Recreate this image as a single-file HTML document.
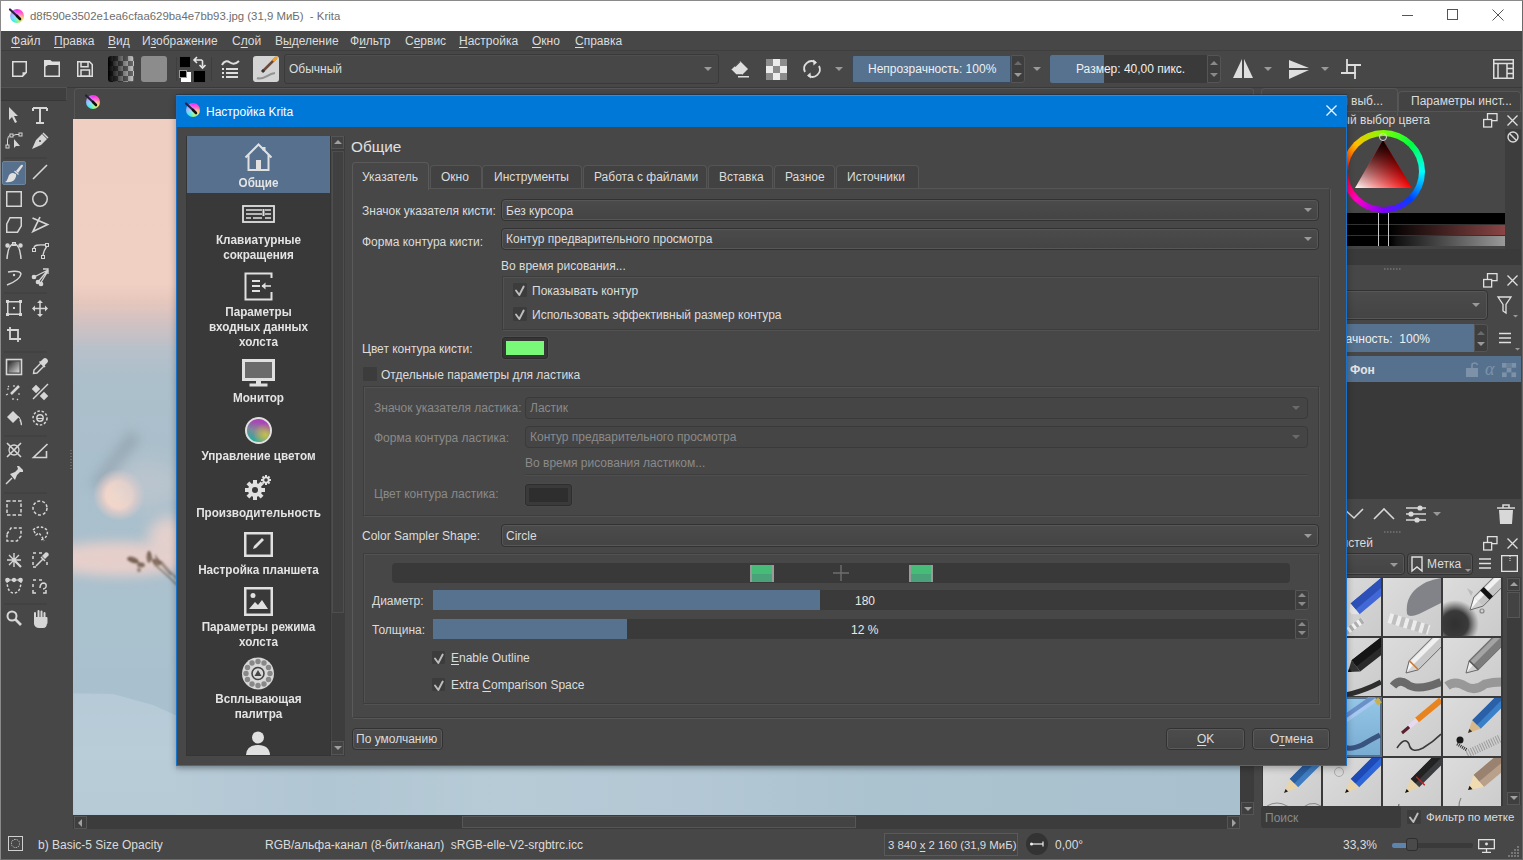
<!DOCTYPE html>
<html><head><meta charset="utf-8">
<style>
*{margin:0;padding:0;box-sizing:border-box}
html,body{width:1523px;height:860px;overflow:hidden;background:#474747;font-family:"Liberation Sans",sans-serif;color:#dcdcdc}
.a{position:absolute}
.t{position:absolute;white-space:nowrap;font-size:12px;line-height:14px}
svg{position:absolute;overflow:visible}
u{text-decoration:underline;text-underline-offset:2px}
.ddarr{position:absolute;width:0;height:0;border-left:4px solid transparent;border-right:4px solid transparent;border-top:4px solid #9a9a9a}
.combo{position:absolute;background:linear-gradient(#4b4b4b,#444);border:1px solid #323232;border-radius:4px;box-shadow:inset 0 0 0 1px #575757}
.chk{position:absolute;width:14px;height:14px;background:#3c3c3c;border-radius:1px}

.kic{position:absolute;width:14px;height:14px;border-radius:50%;background:radial-gradient(circle at 50% 55%,rgba(230,240,255,0.55) 0,rgba(230,240,255,0) 60%),conic-gradient(#ff2cf5 0deg,#ff5cc0 60deg,#ffe060 120deg,#a0f070 165deg,#30f0e0 210deg,#80c8ff 255deg,#b0a0ff 300deg,#ff2cf5 360deg)}
.box{position:absolute;border:1px solid #3e3e3e;box-shadow:1px 1px 0 #505050 inset}
</style></head><body>
<!-- window border -->
<div class="a" style="left:0;top:0;width:1523px;height:860px;border:1px solid #8a8a8a;border-right:1px solid #6a6a6a;border-bottom:1px solid #6a6a6a"></div>
<!-- TITLE BAR -->
<div class="a" style="left:1px;top:1px;width:1521px;height:30px;background:#fff"></div>
<svg style="left:0;top:0;width:0;height:0"><defs><linearGradient id="kg" x1="0" y1="0" x2="1" y2="1"><stop offset="0" stop-color="#b04cff"/><stop offset="1" stop-color="#4ff"/></linearGradient><linearGradient id="kg2" x1="0" y1="1" x2="1" y2="0"><stop offset="0" stop-color="#2ee6ff"/><stop offset="1" stop-color="#ff40e0" stop-opacity="0"/></linearGradient></defs></svg>
<div class="kic" style="left:10px;top:9px"></div><svg style="left:9px;top:8px" width="16" height="16" viewBox="0 0 16 16"><path d="M1 1.5L8 8" stroke="#2a2040" stroke-width="2.2" stroke-linecap="round"/><path d="M8 8L11 11" stroke="#111" stroke-width="2.6" stroke-linecap="round"/></svg>
<div class="t" style="left:30px;top:9px;font-size:11.4px;color:#6e6e6e">d8f590e3502e1ea6cfaa629ba4e7bb93.jpg (31,9 МиБ)&nbsp; - Krita</div>
<svg style="left:1402px;top:15px" width="12" height="1"><rect width="11" height="1" fill="#555"/></svg>
<div class="a" style="left:1447px;top:9px;width:11px;height:11px;border:1px solid #555"></div>
<svg style="left:1492px;top:9px" width="12" height="12" viewBox="0 0 12 12"><path d="M0.5 0.5L11.5 11.5M11.5 0.5L0.5 11.5" stroke="#555" stroke-width="1"/></svg>

<!-- MENU -->
<div class="a" style="left:1px;top:31px;width:1521px;height:19px;background:#474747"></div>
<div class="t" style="left:11px;top:34px;color:#dcdcdc">
<span class="a" style="left:0"><u>Ф</u>айл</span><span class="a" style="left:43px"><u>П</u>равка</span><span class="a" style="left:97px"><u>В</u>ид</span><span class="a" style="left:131px">И<u>з</u>ображение</span><span class="a" style="left:221px">С<u>л</u>ой</span><span class="a" style="left:264px">В<u>ы</u>деление</span><span class="a" style="left:339px">Ф<u>и</u>льтр</span><span class="a" style="left:394px">С<u>е</u>рвис</span><span class="a" style="left:448px"><u>Н</u>астройка</span><span class="a" style="left:521px"><u>О</u>кно</span><span class="a" style="left:564px"><u>С</u>правка</span>
</div>

<!-- TOOLBAR -->
<div class="a" style="left:1px;top:50px;width:1521px;height:38px;background:#474747;border-top:1px solid #3e3e3e;border-bottom:1px solid #3a3a3a"></div>
<!-- new doc -->
<svg style="left:12px;top:61px" width="16" height="17" viewBox="0 0 16 17"><path d="M0.75 0.75H14.25V11.5L10.5 15.25H0.75Z" fill="none" stroke="#dedede" stroke-width="1.5"/><path d="M14.25 11.25L10.5 15.25V11.25Z" fill="#dedede"/></svg>
<!-- open -->
<svg style="left:44px;top:60px" width="17" height="17" viewBox="0 0 17 17"><path d="M0.75 16.25V0.75H6L8 2.25H15.25V16.25Z" fill="none" stroke="#dedede" stroke-width="1.5"/><path d="M0.75 0.75H6L8 2.25H15.25V5H4L0.75 7Z" fill="#dedede"/></svg>
<!-- save -->
<svg style="left:77px;top:61px" width="17" height="17" viewBox="0 0 17 17"><path d="M0.75 0.75H12.5L15.25 3.5V15.25H0.75Z" fill="none" stroke="#dedede" stroke-width="1.5"/><rect x="4" y="0.75" width="7" height="5" fill="none" stroke="#dedede" stroke-width="1.5"/><rect x="4" y="9" width="8.5" height="6.25" fill="none" stroke="#dedede" stroke-width="1.5"/></svg>
<!-- gradient -->
<div class="a" style="left:108px;top:56px;width:26px;height:26px;border-radius:3px;overflow:hidden;background:linear-gradient(90deg,#000 0%,rgba(0,0,0,0.75) 25%,rgba(0,0,0,0) 100%),conic-gradient(#6e6e6e 25%,#c8c8c8 0 50%,#6e6e6e 0 75%,#c8c8c8 0) 0 0/10px 10px"></div>
<!-- pattern -->
<div class="a" style="left:141px;top:56px;width:26px;height:26px;border-radius:3px;background:#8c8c8c"></div>
<!-- fg/bg -->
<div class="a" style="left:176px;top:57px;width:1px;height:24px;background:#3e3e3e"></div>
<div class="a" style="left:179px;top:56px;width:12px;height:12px;background:#000;border:1px solid #444"></div>
<svg style="left:193px;top:56px" width="13" height="13" viewBox="0 0 13 13"><path d="M4 1L1 4L4 7M1.5 4H8.5L9.5 5V10.5M6.5 9L9.5 12L12.5 9" fill="none" stroke="#e6e6e6" stroke-width="1.6"/></svg>
<div class="a" style="left:181px;top:72px;width:10px;height:10px;background:#fff"></div>
<div class="a" style="left:179px;top:70px;width:8px;height:8px;background:#000;border:1px solid #999"></div>
<div class="a" style="left:193px;top:70px;width:13px;height:13px;background:#000;border:1px solid #444"></div>
<div class="a" style="left:211px;top:57px;width:1px;height:24px;background:#3e3e3e"></div>
<!-- brush list -->
<svg style="left:221px;top:59px" width="19" height="20" viewBox="0 0 19 20"><path d="M1 6C3 2 6 1.5 9 3.5S15 5 18 2" fill="none" stroke="#dedede" stroke-width="2"/><rect x="1" y="9" width="2" height="2" fill="#dedede"/><rect x="5" y="9" width="12" height="2" fill="#dedede"/><rect x="1" y="13" width="2" height="2" fill="#dedede"/><rect x="5" y="13" width="12" height="2" fill="#dedede"/><rect x="1" y="17" width="2" height="2" fill="#dedede"/><rect x="5" y="17" width="12" height="2" fill="#dedede"/></svg>
<!-- brush preset thumb -->
<div class="a" style="left:253px;top:56px;width:26px;height:26px;border-radius:3px;background:#d4d4d4;overflow:hidden">
<svg style="left:0;top:0" width="26" height="26" viewBox="0 0 26 26"><path d="M4 22C10 25 14 18 22 17" stroke="#777" stroke-width="2" fill="none" opacity="0.7"/><path d="M10 15L23 2" stroke="#6b4a3a" stroke-width="2.5"/><path d="M20 5L24 1" stroke="#f0a030" stroke-width="3"/><path d="M9 16L11 14" stroke="#333" stroke-width="3"/></svg></div>
<!-- blend combo -->
<div class="combo" style="left:284px;top:54px;width:435px;height:30px;background:#474747;border-color:#3a3a3a;border-radius:3px;box-shadow:inset 0 1px 0 #4e4e4e"></div>
<div class="t" style="left:289px;top:62px;font-size:12px;color:#dcdcdc">Обычный</div>
<div class="ddarr" style="left:704px;top:67px"></div>
<!-- eraser -->
<svg style="left:730px;top:60px" width="20" height="18" viewBox="0 0 20 18"><path d="M10 1L18 9L12 15H6L1 10Z" fill="#dedede"/><path d="M1 10L6 15H12" fill="none" stroke="#474747" stroke-width="1.5"/><path d="M10 1.5L5 6.5" stroke="#474747" stroke-width="1.2"/><rect x="8" y="16" width="11" height="1.5" fill="#dedede"/></svg>
<!-- checker -->
<div class="a" style="left:766px;top:59px;width:21px;height:21px;background:conic-gradient(#ececec 25%,#8c8c8c 0 50%,#ececec 0 75%,#8c8c8c 0) 0 0/14px 14px"></div>
<!-- reload -->
<svg style="left:802px;top:59px" width="20" height="20" viewBox="0 0 20 20"><path d="M3 13A7.5 7.5 0 0 1 13.5 3.2" fill="none" stroke="#dedede" stroke-width="1.8"/><path d="M17 7A7.5 7.5 0 0 1 6.5 16.8" fill="none" stroke="#dedede" stroke-width="1.8"/><path d="M11 0.5L15 3.5L11.5 6.5Z" fill="#dedede"/><path d="M9 19.5L5 16.5L8.5 13.5Z" fill="#dedede"/></svg>
<div class="ddarr" style="left:835px;top:67px"></div>
<!-- opacity slider -->
<div class="a" style="left:852px;top:55px;width:159px;height:28px;background:#56728f;border-radius:2px 0 0 2px;border:1px solid #3a4a5a"></div>
<div class="t" style="left:868px;top:62px;color:#f0f0f0">Непрозрачность: 100%</div>
<div class="a" style="left:1011px;top:55px;width:14px;height:28px;background:#3e3e3e;border:1px solid #555;border-radius:0 3px 3px 0"></div>
<div class="a" style="left:1014px;top:61px;border-left:4px solid transparent;border-right:4px solid transparent;border-bottom:4px solid #6a6a6a"></div>
<div class="a" style="left:1014px;top:73px;border-left:4px solid transparent;border-right:4px solid transparent;border-top:4px solid #9a9a9a"></div>
<div class="ddarr" style="left:1033px;top:67px"></div>
<!-- size slider -->
<div class="a" style="left:1050px;top:55px;width:157px;height:28px;background:#3a3a3a;border-radius:2px 0 0 2px"></div>
<div class="a" style="left:1050px;top:55px;width:54px;height:28px;background:#56728f;border-radius:2px 0 0 2px"></div>
<div class="t" style="left:1076px;top:62px;color:#f0f0f0">Размер: 40,00 пикс.</div>
<div class="a" style="left:1207px;top:55px;width:14px;height:28px;background:#3e3e3e;border:1px solid #555;border-radius:0 3px 3px 0"></div>
<div class="a" style="left:1210px;top:61px;border-left:4px solid transparent;border-right:4px solid transparent;border-bottom:4px solid #8a8a8a"></div>
<div class="a" style="left:1210px;top:73px;border-left:4px solid transparent;border-right:4px solid transparent;border-top:4px solid #8a8a8a"></div>
<!-- mirror H -->
<svg style="left:1232px;top:58px" width="22" height="22" viewBox="0 0 22 22"><path d="M10 1V20H1Z" fill="#dedede"/><path d="M12 1V20H21Z" fill="#dedede"/></svg>
<div class="ddarr" style="left:1264px;top:67px"></div>
<!-- mirror V -->
<svg style="left:1288px;top:59px" width="22" height="21" viewBox="0 0 22 21"><path d="M1 1L21 9H1Z" fill="#dedede"/><path d="M1 11H21L1 20Z" fill="#dedede"/></svg>
<div class="ddarr" style="left:1321px;top:67px"></div>
<!-- crop -->
<svg style="left:1340px;top:58px" width="22" height="22" viewBox="1340 58 22 22"><path d="M1347 59V73.5M1347 65H1361M1355 65V79M1341 73H1356" fill="none" stroke="#dedede" stroke-width="1.8"/></svg>
<!-- workspace -->
<svg style="left:1493px;top:59px" width="21" height="20" viewBox="0 0 21 20"><rect x="0.75" y="0.75" width="19.5" height="18.5" fill="none" stroke="#dedede" stroke-width="1.5"/><path d="M0.75 4.5H20.25M5 4.5V19.25M14 4.5V19.25M14 9.5H20.25M14 14.5H20.25" stroke="#dedede" stroke-width="1.5"/></svg>

<!-- TOOLBOX -->
<div class="a" style="left:1px;top:88px;width:71px;height:741px;background:#474747"></div>
<div class="a" style="left:1px;top:87px;width:66px;height:14px;background:#3f3f3f;border:1px solid #4e4e4e;border-left:none;border-top-color:#525252;border-bottom-color:#383838"></div>
<svg style="left:0;top:100px" width="72" height="540" viewBox="0 100 72 540" fill="none" stroke="#d6d6d6" stroke-width="1.5">
 <!-- select -->
 <path d="M9 107L9 120L12 117L15 123L17 122L14 116L18 116Z" fill="#d6d6d6" stroke="none"/>
 <!-- text -->
 <path d="M33 108H47M40 108V123M36 123H44M33 108V111M47 108V111" stroke-width="2"/>
 <!-- path edit -->
 <rect x="6" y="145" width="3" height="3" stroke-width="1"/><rect x="10" y="134" width="3" height="3" stroke-width="1"/><rect x="19" y="133" width="3" height="3" stroke-width="1"/><path d="M7.5 145V140Q8 135 10 135.5M13 135.5Q16 134 19 134.5" stroke-width="1"/><path d="M14 139V148L16 146L20 146Z" fill="#d6d6d6" stroke="none"/>
 <!-- pen calligraphy -->
 <path d="M32 149L36 140L42 134L47 139L41 145ZM33 148L39 142" fill="#d6d6d6" stroke="none"/><path d="M43 133L48 138" stroke-width="1.5"/><circle cx="40" cy="141" r="1" fill="#474747" stroke="none"/>
 <!-- separator -->
 <path d="M4 158H47" stroke="#3e3e3e" stroke-width="1"/>
 <!-- rect -->
 <rect x="6.75" y="191.75" width="14.5" height="14.5"/>
 <!-- ellipse -->
 <circle cx="40" cy="199" r="7.25"/>
 <!-- polygon -->
 <path d="M6.75 224L10 217.75H21.25V226L17.5 232.25H6.75Z"/>
 <!-- polyline -->
 <path d="M32.5 218L47.5 224.5L33 231.5L40 217" stroke-width="1.7"/>
 <!-- bezier -->
 <path d="M7 259Q8 244 14 244Q20 244 21 259"/><circle cx="7.5" cy="245.5" r="1.5" fill="#d6d6d6"/><rect x="12.5" y="242.5" width="3" height="3" stroke-width="1"/><circle cx="20.5" cy="245.5" r="1.5" fill="#d6d6d6"/>
 <!-- curve path -->
 <rect x="32.5" y="248.5" width="3" height="3" stroke-width="1"/><rect x="45.5" y="243.5" width="3" height="3" stroke-width="1"/><rect x="41.5" y="255.5" width="3" height="3" stroke-width="1"/><path d="M34 248Q34 244 45 245M47 246Q44 250 43 255" stroke-width="1.3"/>
 <!-- freehand path -->
 <path d="M8 272Q20 270 21 274Q20 280 7 285" stroke-width="1.5"/><circle cx="14" cy="275" r="1.2" fill="#d6d6d6" stroke="none"/>
 <!-- dyna -->
 <path d="M34 277L48 270M38 282L48 270M40 284L48 271" stroke-width="1.3"/><circle cx="34" cy="277" r="1.6" fill="#d6d6d6"/><circle cx="38" cy="282" r="1.6" fill="#d6d6d6"/><circle cx="41" cy="284" r="1.6" fill="#d6d6d6"/><path d="M43 269L48 269L48 274" stroke-width="1.3"/>
 <path d="M4 293H47" stroke="#3e3e3e" stroke-width="1"/>
 <!-- transform -->
 <rect x="7.75" y="301.75" width="12.5" height="12.5"/><rect x="6" y="300" width="3" height="3" fill="#d6d6d6" stroke="none"/><rect x="19" y="300" width="3" height="3" fill="#d6d6d6" stroke="none"/><rect x="6" y="313" width="3" height="3" fill="#d6d6d6" stroke="none"/><rect x="19" y="313" width="3" height="3" fill="#d6d6d6" stroke="none"/><rect x="13" y="307" width="2" height="2" fill="#d6d6d6" stroke="none"/>
 <!-- move -->
 <path d="M40 301V316M33 308.5H47"/><path d="M40 300L37 303H43ZM40 317L37 314H43ZM32 308.5L35 305.5V311.5ZM48 308.5L45 305.5V311.5Z" fill="#d6d6d6" stroke="none"/>
 <!-- crop -->
 <path d="M10 327V339H21M7 330H18V342" stroke-width="1.8"/>
 <path d="M4 352H47" stroke="#3e3e3e" stroke-width="1"/>
 <!-- gradient -->
 <defs><linearGradient id="gtg" x1="0" y1="0" x2="1" y2="1"><stop offset="0" stop-color="#2a2a2a"/><stop offset="1" stop-color="#d8d8d8"/></linearGradient></defs>
 <rect x="6.5" y="359.5" width="15" height="15" stroke-width="1.6"/><rect x="8.5" y="361.5" width="11" height="11" fill="url(#gtg)" stroke="none"/>
 <!-- color picker -->
 <path d="M33.5 373.5L34 370L41 363L44 366L37 373Z" stroke-width="1.4"/><path d="M40 362L43 359Q45 357 47 359Q49 361 47 363L44 366Z" fill="#d6d6d6" stroke="none"/><path d="M39.5 361.5L45 367" stroke-width="1.6"/>
 <!-- smart patch -->
 <path d="M11 394L19 386" stroke-width="2.5"/><path d="M7 389H9M14 385V387M6 395L8 394M13 398L13 400M18 394H20M8 386L9 387M17 399L18 400" stroke-width="1.2"/>
 <!-- color sampler multi -->
 <path d="M33 399L48 384" stroke-width="1.5"/><rect x="33" y="386" width="6" height="6" fill="#d6d6d6" stroke="none" transform="rotate(45 36 389)"/><rect x="41" y="393" width="6" height="6" fill="#d6d6d6" stroke="none" transform="rotate(45 44 396)"/>
 <!-- fill -->
 <path d="M7 417L13 411L19 417L13 423Z" fill="#d6d6d6" stroke="none"/><path d="M8 417H19L21 421" stroke="#d6d6d6" stroke-width="1"/><path d="M20 420Q22 424 21 425" stroke-width="1.5"/>
 <!-- enclose fill -->
 <circle cx="40" cy="418" r="7" stroke-dasharray="2.5 1.8"/><circle cx="40" cy="418" r="3.2" stroke-width="1.4"/><path d="M37 418.5H43" stroke-width="1.2"/>
 <path d="M4 436H47" stroke="#3e3e3e" stroke-width="1"/>
 <!-- assistant -->
 <path d="M7 443L21 457M21 443L7 457" stroke-width="1.6"/><circle cx="14" cy="450" r="5" stroke-width="1.3"/>
 <!-- measure -->
 <path d="M47.5 444L33.5 457.5H46.5V451" stroke-width="1.6"/>
 <!-- pin -->
 <path d="M6 484L12 478" stroke-width="1.4"/><path d="M10 474L15 472L18 469L17 466L19 466L23 470L23 472L20 472L17 475L15 480Z" fill="#d6d6d6" stroke="none"/>
 <path d="M4 493H47" stroke="#3e3e3e" stroke-width="1"/>
 <!-- rect sel -->
 <rect x="7" y="501" width="14" height="14" stroke-dasharray="3.5 2" stroke-width="1.5"/>
 <!-- ellipse sel -->
 <circle cx="40" cy="508" r="7" stroke-dasharray="3 2" stroke-width="1.5"/>
 <!-- poly sel -->
 <path d="M7 534L11 528H21V536L17 541H7Z" stroke-dasharray="3 2"/>
 <!-- freehand sel -->
 <path d="M33 530Q40 524 47 530Q49 537 41 540M34 531L36 535L39 533L42 537L44 541" stroke-dasharray="2.5 1.8"/>
 <!-- magic wand -->
 <path d="M14 560L21 567" stroke-width="2.2"/><path d="M14 553V567M7 560H21M9 555L19 565M19 555L9 565" stroke-width="1.4"/>
 <!-- similar sel -->
 <path d="M33 553H36M39 553H42M33 556V559M33 562V565M33 567H36M47 562V565" stroke-width="1.5"/><path d="M36 566L43 559M41 557L45 561" stroke-width="1.5"/><path d="M43 556L46 553Q48 553 48 555L45 558Z" fill="#d6d6d6"/>
 <!-- bezier sel -->
 <path d="M7 580Q7 593 14 593Q21 593 21 580" stroke-dasharray="2.5 1.8"/><path d="M7.5 580H20.5" stroke-width="1.2"/><circle cx="7.5" cy="580" r="1.6" fill="#d6d6d6"/><circle cx="20.5" cy="580" r="1.6" fill="#d6d6d6"/><circle cx="14" cy="580" r="1.4" fill="#d6d6d6"/>
 <!-- magnetic sel -->
 <path d="M33 580H36M39 580H42M33 584V587M33 590V593H36M46 590V593H43" stroke-width="1.5"/><path d="M40 588Q40 584 43 583Q47 583 46 587Q45 589 43 589" stroke-width="1.5"/>
 <path d="M4 604H47" stroke="#3e3e3e" stroke-width="1"/>
 <!-- zoom -->
 <circle cx="12" cy="616" r="4.5" stroke-width="2"/><path d="M15 619L21 625" stroke-width="2.6"/>
 <!-- pan -->
 <path d="M34 617V624Q35 628 39 628H43Q47 628 47 623V617" fill="#d6d6d6" stroke="none"/><path d="M35 619V613M38.5 618V611M41.5 618V611.5M44.5 619V613M46.5 623V618" stroke-width="2" stroke-linecap="round"/>
</svg>
<div class="a" style="left:2px;top:161px;width:24px;height:24px;background:#56708d;border:1px solid #6a86a3;border-radius:2px"></div>
<svg style="left:2px;top:161px" width="24" height="24" viewBox="0 0 24 24"><path d="M14 10L19 4Q21 3 21 5L16 12Z" fill="#e0e0e0"/><path d="M12.5 10L16.5 13.5" stroke="#e0e0e0" stroke-width="1.2"/><path d="M11 12Q7 12 6 17Q5 20 3 21Q10 22 13 18Q15 15 14 13Z" fill="#e0e0e0"/></svg>
<!-- line tool -->
<svg style="left:31px;top:163px" width="18" height="18"><path d="M2 16L16 2" stroke="#d6d6d6" stroke-width="1.6"/></svg>
<!-- grip -->
<svg style="left:70px;top:450px" width="2" height="21"><path d="M1 0V21" stroke="#8a8a8a" stroke-width="1" stroke-dasharray="1 2"/></svg>
<!-- toolbox bottom statusbar icon line -->


<!-- CANVAS -->
<div class="a" style="left:72px;top:88px;width:1188px;height:741px;background:#474747"></div>
<div class="a" style="left:74px;top:88px;width:1180px;height:31px;background:#474747;border:1px solid #565656;border-bottom:none;border-radius:4px 4px 0 0"></div>
<div class="kic" style="left:86px;top:95px"></div><svg style="left:85px;top:94px" width="16" height="16" viewBox="0 0 16 16"><path d="M1 1.5L8 8" stroke="#2a2040" stroke-width="2.2" stroke-linecap="round"/><path d="M8 8L11 11" stroke="#111" stroke-width="2.6" stroke-linecap="round"/></svg>
<div class="a" style="left:73px;top:119px;width:1167px;height:696px;overflow:hidden;background:linear-gradient(180deg,#efcfc2 0px,#f0d0c3 165px,#e8c8bd 180px,#d0c1c2 205px,#b6c0ca 232px,#acbfcb 260px,#a9bfcc 360px,#abc1ce 470px,#a9c1ce 575px,#aac2cf 700px)">
  <div class="a" style="left:0;top:574px;width:400px;height:122px;background:linear-gradient(180deg,#b6cbd7 0,#b9cdd9 60px,#b7cbd7 122px);clip-path:polygon(0 0,40px 1px,80px 12px,120px 30px,170px 60px,240px 122px,0 122px);filter:blur(1.2px)"></div>
  <div class="a" style="left:103px;top:646px;width:1064px;height:50px;background:linear-gradient(90deg,#b7cbd7 0,#b0c6d2 150px,#b6cbd6 320px,#b3c8d4 520px,#abc2cf 700px,#a9c1ce 1064px)"></div>
  <div class="a" style="left:103px;top:646px;width:1064px;height:6px;background:linear-gradient(180deg,rgba(110,130,145,0.3),rgba(110,130,145,0))"></div>
  <div class="a" style="left:10px;top:335px;width:66px;height:14px;background:#8593a0;filter:blur(6px);transform:rotate(-54deg);opacity:0.5"></div>
  <div class="a" style="left:20px;top:350px;width:52px;height:52px;border-radius:50%;background:radial-gradient(closest-side,#f7dbcd 0%,#f3d6c9 50%,rgba(230,205,200,0.75) 68%,rgba(200,205,215,0) 100%)"></div>
  <div class="a" style="left:-30px;top:423px;width:150px;height:34px;border-radius:50%;background:#e6cfcb;filter:blur(6px)"></div>
  <div class="a" style="left:75px;top:398px;width:40px;height:45px;border-radius:50%;background:#e3d0cd;filter:blur(7px)"></div>
  <div class="a" style="left:40px;top:340px;width:70px;height:50px;border-radius:50%;background:#c9c9cf;filter:blur(10px);opacity:0.5"></div>
  <svg style="left:46px;top:426px;filter:blur(0.9px)" width="60" height="45" viewBox="0 0 60 45"><path d="M8 14Q18 16 24 20M30 6Q32 14 36 20Q46 28 58 40M36 10Q44 22 52 30M42 16Q50 26 58 34" stroke="#5a4838" stroke-width="1.1" fill="none" opacity="0.8"/><ellipse cx="14" cy="15" rx="6" ry="3" fill="#5e4a38" opacity="0.75" transform="rotate(20 14 15)"/><ellipse cx="22" cy="20" rx="4" ry="2.5" fill="#5e4a38" opacity="0.7"/><ellipse cx="30" cy="12" rx="2.5" ry="6" fill="#5e4a38" opacity="0.7"/><ellipse cx="38" cy="17" rx="4.5" ry="3" fill="#5e4a38" opacity="0.7" transform="rotate(30 38 17)"/><ellipse cx="20" cy="25" rx="2" ry="2" fill="#5e4a38" opacity="0.6"/></svg>
</div>
<!-- vertical scrollbar -->
<div class="a" style="left:1240px;top:119px;width:14px;height:696px;background:#3c3c3c"></div>
<div class="a" style="left:1241px;top:802px;width:13px;height:13px;border:1px solid #555;background:#3f3f3f"></div>
<div class="a" style="left:1244px;top:807px;border-left:4px solid transparent;border-right:4px solid transparent;border-top:4px solid #a0a0a0"></div>
<!-- horizontal scrollbar -->
<div class="a" style="left:73px;top:815px;width:1167px;height:14px;background:#3c3c3c"></div>
<div class="a" style="left:74px;top:816px;width:13px;height:13px;border:1px solid #555;background:#3f3f3f"></div>
<div class="a" style="left:78px;top:819px;border-top:4px solid transparent;border-bottom:4px solid transparent;border-right:4px solid #a0a0a0"></div>
<div class="a" style="left:462px;top:816px;width:394px;height:12px;border:1px solid #565656;background:#434343"></div>
<div class="a" style="left:1227px;top:816px;width:13px;height:13px;border:1px solid #555;background:#3f3f3f"></div>
<div class="a" style="left:1232px;top:819px;border-top:4px solid transparent;border-bottom:4px solid transparent;border-left:4px solid #a0a0a0"></div>

<!-- DOCK -->
<div class="a" style="left:1255px;top:88px;width:267px;height:741px;background:#474747"></div>
<div class="a" style="left:1261px;top:88px;width:137px;height:28px;background:#474747;border:1px solid #565656;border-bottom:none;border-radius:4px 4px 0 0"></div>
<div class="t" style="right:140px;top:94px">Расширенный выб...</div>
<div class="a" style="left:1398px;top:91px;width:123px;height:20px;background:#434343;border:1px solid #565656;border-bottom:none;border-radius:4px 4px 0 0"></div>
<div class="t" style="left:1411px;top:94px">Параметры инст...</div>
<div class="a" style="left:1261px;top:111px;width:261px;height:1px;background:#555"></div>
<div class="t" style="right:93px;top:113px">Расширенный выбор цвета</div>
<svg style="left:1483px;top:113px" width="15" height="15" viewBox="0 0 15 15" fill="none" stroke="#e0e0e0" stroke-width="1.3"><rect x="4.5" y="0.65" width="9.5" height="7"/><rect x="0.65" y="6.5" width="8" height="7.5" fill="#474747"/></svg>
<svg style="left:1507px;top:115px" width="11" height="11" viewBox="0 0 11 11"><path d="M0.5 0.5L10.5 10.5M10.5 0.5L0.5 10.5" stroke="#e0e0e0" stroke-width="1.3"/></svg>
<!-- color selector -->
<div class="a" style="left:1505px;top:129px;width:16px;height:136px;background:#3d3d3d"></div>
<svg style="left:1507px;top:131px" width="12" height="12" viewBox="0 0 12 12" fill="none" stroke="#d8d8d8" stroke-width="1.4"><circle cx="6" cy="6" r="5"/><path d="M2.5 2.5L9.5 9.5"/></svg>
<div class="a" style="left:1342px;top:130px;width:83px;height:83px;border-radius:50%;background:conic-gradient(hsl(90,100%,50%),hsl(135,100%,50%),hsl(180,100%,50%),hsl(225,100%,50%),hsl(270,100%,50%),hsl(315,100%,50%),hsl(360,100%,50%),hsl(405,100%,50%),hsl(450,100%,50%))"></div>
<div class="a" style="left:1348px;top:136px;width:71px;height:71px;border-radius:50%;background:#474747"></div>
<svg style="left:1340px;top:130px" width="90" height="90" viewBox="1340 130 90 90">
 <defs><linearGradient id="trw" x1="1355" y1="188" x2="1398" y2="163" gradientUnits="userSpaceOnUse"><stop offset="0" stop-color="#fff"/><stop offset="1" stop-color="#fff" stop-opacity="0"/></linearGradient>
 <linearGradient id="trb" x1="1383" y1="140" x2="1383" y2="188" gradientUnits="userSpaceOnUse"><stop offset="0" stop-color="#000"/><stop offset="1" stop-color="#000" stop-opacity="0"/></linearGradient></defs>
 <path d="M1383 140L1412 188H1355Z" fill="#ff0000"/>
 <path d="M1383 140L1412 188H1355Z" fill="url(#trw)"/>
 <path d="M1383 140L1412 188H1355Z" fill="url(#trb)"/>
 <circle cx="1383" cy="137" r="3.5" fill="none" stroke="#ddd" stroke-width="1"/>
</svg>
<div class="a" style="left:1342px;top:213px;width:163px;height:11px;background:#000"></div>
<div class="a" style="left:1342px;top:224px;width:163px;height:11px;background:linear-gradient(90deg,#000 0,#000 48px,#0a0505 55px,#8a4545 100%);border-top:1px solid #333"></div>
<div class="a" style="left:1342px;top:235px;width:163px;height:11px;background:linear-gradient(90deg,#000 0,#000 48px,#111 55px,#9a9a9a 100%);border-top:1px solid #333"></div>
<div class="a" style="left:1378px;top:213px;width:11px;height:33px;border-left:1px solid #c8c8c8;border-right:1px solid #c8c8c8"></div>
<div class="a" style="left:1342px;top:246px;width:163px;height:3px;background:#444"></div><div class="a" style="left:1342px;top:249px;width:179px;height:16px;background:#3a3a3a"></div>
<svg style="left:1384px;top:268px" width="18" height="2"><path d="M0 1H18" stroke="#8a8a8a" stroke-width="1.2" stroke-dasharray="1.5 1.5"/></svg>
<!-- layers -->
<svg style="left:1483px;top:273px" width="15" height="15" viewBox="0 0 15 15" fill="none" stroke="#e0e0e0" stroke-width="1.3"><rect x="4.5" y="0.65" width="9.5" height="7"/><rect x="0.65" y="6.5" width="8" height="7.5" fill="#474747"/></svg>
<svg style="left:1507px;top:275px" width="11" height="11" viewBox="0 0 11 11"><path d="M0.5 0.5L10.5 10.5M10.5 0.5L0.5 10.5" stroke="#e0e0e0" stroke-width="1.3"/></svg>
<div class="combo" style="left:1263px;top:290px;width:225px;height:30px"></div>
<div class="ddarr" style="left:1472px;top:303px"></div>
<svg style="left:1497px;top:296px" width="22" height="22" viewBox="0 0 22 22"><path d="M1 1H14L9 8.5V17L6 15V8.5Z" fill="none" stroke="#e0e0e0" stroke-width="1.3"/><path d="M16 19H21L18.5 21.5Z" fill="#999"/></svg>
<div class="a" style="left:1263px;top:324px;width:211px;height:28px;background:#56728f;border-radius:2px 0 0 2px"></div>
<div class="t" style="right:93px;top:332px;color:#eee">Непрозрачность:&nbsp; 100%</div>
<div class="a" style="left:1474px;top:324px;width:14px;height:28px;background:#3e3e3e;border:1px solid #555;border-radius:0 3px 3px 0"></div>
<div class="a" style="left:1477px;top:331px;border-left:4px solid transparent;border-right:4px solid transparent;border-bottom:4px solid #6a6a6a"></div>
<div class="a" style="left:1477px;top:342px;border-left:4px solid transparent;border-right:4px solid transparent;border-top:4px solid #9a9a9a"></div>
<svg style="left:1499px;top:332px" width="22" height="20" viewBox="0 0 22 20"><path d="M0 1.5H12M0 6H12M0 10.5H12" stroke="#e0e0e0" stroke-width="1.5"/><path d="M16 16H21L18.5 18.5Z" fill="#999"/></svg>
<div class="a" style="left:1263px;top:356px;width:258px;height:26px;background:#56718e"></div>
<div class="t" style="left:1350px;top:363px;font-weight:bold;color:#e4e4e4">Фон</div>
<svg style="left:1464px;top:361px" width="56" height="16" viewBox="0 0 56 16"><rect x="2" y="7" width="12" height="9" fill="#7d92a8"/><path d="M8 7V4Q8 2 11 2Q13 2 13.5 4" fill="none" stroke="#7d92a8" stroke-width="1.6"/><text x="21" y="14" font-family="Liberation Serif" font-style="italic" font-size="18" fill="#7d92a8">α</text><rect x="38" y="2" width="4.7" height="4.7" fill="#7d92a8"/><rect x="47.4" y="2" width="4.7" height="4.7" fill="#7d92a8"/><rect x="42.7" y="6.7" width="4.7" height="4.7" fill="#7d92a8"/><rect x="38" y="11.4" width="4.7" height="4.7" fill="#7d92a8"/><rect x="47.4" y="11.4" width="4.7" height="4.7" fill="#7d92a8"/><rect x="42.7" y="2" width="4.7" height="4.7" fill="#6a829a"/></svg>
<div class="a" style="left:1263px;top:382px;width:258px;height:117px;background:#393939"></div>
<svg style="left:1340px;top:503px" width="110" height="22" viewBox="1340 503 110 22" fill="none" stroke="#d8d8d8" stroke-width="1.6"><path d="M1344 509L1354 518L1363 509"/><path d="M1374 519L1384 509L1394 519"/><path d="M1406 508H1426M1406 514H1426M1406 520H1426" stroke-width="1.4"/><circle cx="1420" cy="508" r="1.8" fill="#d8d8d8"/><circle cx="1411" cy="514" r="1.8" fill="#d8d8d8"/><circle cx="1417" cy="520" r="1.8" fill="#d8d8d8"/><path d="M1433 512H1441L1437 516Z" fill="#999" stroke="none"/></svg>
<svg style="left:1496px;top:503px" width="20" height="22" viewBox="0 0 20 22"><path d="M1 5H19M7 5V2H13V5" fill="none" stroke="#d8d8d8" stroke-width="1.6"/><path d="M3 7H17L16 21H4Z" fill="#d8d8d8"/></svg>
<svg style="left:1384px;top:531px" width="18" height="2"><path d="M0 1H18" stroke="#8a8a8a" stroke-width="1.2" stroke-dasharray="1.5 1.5"/></svg>
<!-- brush presets -->
<div class="t" style="right:150px;top:536px">Заготовки кистей</div>
<svg style="left:1483px;top:536px" width="15" height="15" viewBox="0 0 15 15" fill="none" stroke="#e0e0e0" stroke-width="1.3"><rect x="4.5" y="0.65" width="9.5" height="7"/><rect x="0.65" y="6.5" width="8" height="7.5" fill="#474747"/></svg>
<svg style="left:1507px;top:538px" width="11" height="11" viewBox="0 0 11 11"><path d="M0.5 0.5L10.5 10.5M10.5 0.5L0.5 10.5" stroke="#e0e0e0" stroke-width="1.3"/></svg>
<div class="combo" style="left:1263px;top:553px;width:142px;height:22px"></div>
<div class="ddarr" style="left:1390px;top:563px"></div>
<div class="combo" style="left:1407px;top:553px;width:66px;height:22px"></div>
<svg style="left:1411px;top:556px" width="12" height="16" viewBox="0 0 12 16"><path d="M1 1H11V15L6 11L1 15Z" fill="none" stroke="#e0e0e0" stroke-width="1.4"/></svg>
<div class="t" style="left:1427px;top:557px">Метка</div>
<div class="a" style="left:1465px;top:569px;border-left:3px solid transparent;border-right:3px solid transparent;border-top:3px solid #999"></div>
<svg style="left:1479px;top:558px" width="13" height="11"><path d="M0 1H12M0 5.5H12M0 10H12" stroke="#e0e0e0" stroke-width="1.5"/></svg>
<svg style="left:1501px;top:555px" width="17" height="17" viewBox="0 0 17 17"><rect x="0.65" y="0.65" width="15.7" height="15.7" fill="none" stroke="#e0e0e0" stroke-width="1.3"/><path d="M9 1V6" stroke="#e0e0e0" stroke-width="1" stroke-dasharray="1 1"/></svg>
<div class="a" style="left:1262px;top:577px;width:241px;height:229px;background:#3a3a3a;overflow:hidden">
<!--BRUSHGRID-->
<svg style="left:1px;top:1px;overflow:hidden" width="58" height="58" viewBox="0 0 58 58"><defs><linearGradient id="cbg00" x1="0" y1="0" x2="1" y2="1"><stop offset="0" stop-color="#dcdcdc"/><stop offset="1" stop-color="#cbcbcb"/></linearGradient></defs><rect width="58" height="58" fill="url(#cbg00)"/><path d="M15.9 34.6L52.7 -2.2L44.2 -10.7L7.4 26.1Z" fill="#3a62c8"/><path d="M12.1 30.8L48.9 -6.0L44.2 -10.7L7.4 26.1Z" fill="#2a4aa8"/><path d="M15.9 34.6L6.0 36.0L7.4 26.1Z" fill="#e8e8e8"/><path d="M9.7 35.5L6.0 36.0L6.5 32.3Z" fill="#bbb"/><path d="M2 56Q18 48 30 38" stroke="#f0f0f0" stroke-width="5" stroke-dasharray="3 3" opacity="0.9"/></svg>
<svg style="left:61px;top:1px;overflow:hidden" width="58" height="58" viewBox="0 0 58 58"><defs><linearGradient id="cbg10" x1="0" y1="0" x2="1" y2="1"><stop offset="0" stop-color="#dcdcdc"/><stop offset="1" stop-color="#cbcbcb"/></linearGradient></defs><rect width="58" height="58" fill="url(#cbg10)"/><path d="M36.6 36.2L76.5 2.8L67.5 -7.9L27.6 25.5Z" fill="#4268d8"/><path d="M32.6 31.4L72.4 -2.0L67.5 -7.9L27.6 25.5Z" fill="#2d4fb8"/><path d="M36.6 36.2L26.0 36.0L27.6 25.5Z" fill="#e4e4e4"/><path d="M28.7 36.1L26.0 36.0L26.4 33.4Z" fill="#cfcfcf"/><path d="M20 56L40 42" stroke="#f2f2f2" stroke-width="6" stroke-dasharray="3 3"/><path d="M20 56L40 42" stroke="#999" stroke-width="6" stroke-dasharray="3 3" stroke-dashoffset="3" opacity="0.6"/></svg>
<svg style="left:121px;top:1px;overflow:hidden" width="58" height="58" viewBox="0 0 58 58"><defs><linearGradient id="cbg20" x1="0" y1="0" x2="1" y2="1"><stop offset="0" stop-color="#dcdcdc"/><stop offset="1" stop-color="#cbcbcb"/></linearGradient></defs><rect width="58" height="58" fill="url(#cbg20)"/><path d="M24 36Q22 20 34 10Q44 2 58 0V25Q48 30 36 36Q26 40 24 36Z" fill="#818388"/><path d="M6 40L46 52" stroke="#f0f0f0" stroke-width="10" stroke-dasharray="4 4" opacity="0.9"/><path d="M6 40L46 52" stroke="#b8b8b8" stroke-width="10" stroke-dasharray="4 4" stroke-dashoffset="4" opacity="0.7"/></svg>
<svg style="left:181px;top:1px;overflow:hidden" width="58" height="58" viewBox="0 0 58 58"><defs><linearGradient id="cbg30" x1="0" y1="0" x2="1" y2="1"><stop offset="0" stop-color="#dcdcdc"/><stop offset="1" stop-color="#cbcbcb"/></linearGradient></defs><rect width="58" height="58" fill="url(#cbg30)"/><defs><radialGradient id="ab"><stop offset="0" stop-color="#303030"/><stop offset="0.55" stop-color="#3a3a3a"/><stop offset="1" stop-color="#555" stop-opacity="0"/></radialGradient></defs><circle cx="12" cy="46" r="24" fill="url(#ab)"/><path d="M40.1 28.1L81.1 -12.9L71.9 -22.1L30.9 18.9Z" fill="#c4c4c4"/><path d="M35.0 23.1L76.0 -18.0L72.8 -21.2L31.8 19.8Z" fill="#f2f2f2"/><path d="M39.4 27.4L27.0 32.0L31.6 19.6Z" fill="#cfcfcf"/><path d="M35.0 23.1L27.0 32.0L31.6 19.6Z" fill="#f8f8f8"/><path d="M81.1 -12.9L40.1 28.1L27.0 32.0L30.9 18.9L71.9 -22.1" fill="none" stroke="#6a6a6a" stroke-width="1"/><path d="M41.8 17.2L45.4 13.6" stroke="#111" stroke-width="13"/><circle cx="39" cy="33" r="2" fill="none" stroke="#888" stroke-width="1.2"/><path d="M30 14L24 10L28 18Z" fill="#bbb"/></svg>
<svg style="left:1px;top:61px;overflow:hidden" width="58" height="58" viewBox="0 0 58 58"><defs><linearGradient id="cbg01" x1="0" y1="0" x2="1" y2="1"><stop offset="0" stop-color="#dcdcdc"/><stop offset="1" stop-color="#cbcbcb"/></linearGradient></defs><rect width="58" height="58" fill="url(#cbg01)"/><path d="M15.3 37.2L50.7 1.8L42.2 -6.7L6.8 28.7Z" fill="#333"/><path d="M11.5 33.4L46.9 -2.0L42.2 -6.7L6.8 28.7Z" fill="#1a1a1a"/><path d="M15.3 37.2L4.0 40.0L6.8 28.7Z" fill="#2a2a2a"/><path d="M7.4 39.2L4.0 40.0L4.8 36.6Z" fill="#111"/><path d="M0 54Q30 50 58 40" stroke="#333" stroke-width="5" fill="none"/></svg>
<svg style="left:61px;top:61px;overflow:hidden" width="58" height="58" viewBox="0 0 58 58"><defs><linearGradient id="cbg11" x1="0" y1="0" x2="1" y2="1"><stop offset="0" stop-color="#dcdcdc"/><stop offset="1" stop-color="#cbcbcb"/></linearGradient></defs><rect width="58" height="58" fill="url(#cbg11)"/><path d="M37.2 33.4L76.6 2.6L68.0 -8.5L28.6 22.3Z" fill="#2a2a2a"/><path d="M33.3 28.4L72.7 -2.4L68.0 -8.5L28.6 22.3Z" fill="#151515"/><path d="M37.2 33.4L25.0 34.0L28.6 22.3Z" fill="#333"/><path d="M28.7 33.8L25.0 34.0L26.1 30.5Z" fill="#111"/><path d="M18 58Q40 54 58 44" stroke="#2e2e2e" stroke-width="5" fill="none"/></svg>
<svg style="left:121px;top:61px;overflow:hidden" width="58" height="58" viewBox="0 0 58 58"><defs><linearGradient id="cbg21" x1="0" y1="0" x2="1" y2="1"><stop offset="0" stop-color="#dcdcdc"/><stop offset="1" stop-color="#cbcbcb"/></linearGradient></defs><rect width="58" height="58" fill="url(#cbg21)"/><path d="M10 48Q16 40 24 46Q34 54 58 44" stroke="#505050" stroke-width="8" fill="none" opacity="0.8"/><path d="M35.4 31.8L77.1 -9.9L67.9 -19.1L26.2 22.6Z" fill="#c8c8c8"/><path d="M30.3 26.8L72.0 -15.0L68.8 -18.2L27.1 23.5Z" fill="#f0f0f0"/><path d="M34.7 31.1L23.0 35.0L26.9 23.3Z" fill="#d4d4d4"/><path d="M30.3 26.8L23.0 35.0L26.9 23.3Z" fill="#f8f8f8"/><path d="M77.1 -9.9L35.4 31.8L23.0 35.0L26.2 22.6L67.9 -19.1" fill="none" stroke="#6a6a6a" stroke-width="1"/><path d="M35.4 31.8L26.2 22.6" stroke="#d07a30" stroke-width="1.6"/></svg>
<svg style="left:181px;top:61px;overflow:hidden" width="58" height="58" viewBox="0 0 58 58"><defs><linearGradient id="cbg31" x1="0" y1="0" x2="1" y2="1"><stop offset="0" stop-color="#dcdcdc"/><stop offset="1" stop-color="#cbcbcb"/></linearGradient></defs><rect width="58" height="58" fill="url(#cbg31)"/><path d="M4 48Q12 42 22 48Q32 54 42 46Q50 44 58 44" stroke="#7a7a7a" stroke-width="9" fill="none" opacity="0.65"/><path d="M35.4 31.8L77.1 -9.9L67.9 -19.1L26.2 22.6Z" fill="#7c7c7c"/><path d="M30.3 26.8L72.0 -15.0L68.8 -18.2L27.1 23.5Z" fill="#a4a4a4"/><path d="M34.7 31.1L23.0 35.0L26.9 23.3Z" fill="#d0d0d0"/><path d="M30.3 26.8L23.0 35.0L26.9 23.3Z" fill="#f2f2f2"/><path d="M77.1 -9.9L35.4 31.8L23.0 35.0L26.2 22.6L67.9 -19.1" fill="none" stroke="#6a6a6a" stroke-width="1"/><path d="M35.4 31.8L26.2 22.6" stroke="#5a5a5a" stroke-width="1.6"/></svg>
<svg style="left:1px;top:121px;overflow:hidden" width="58" height="58" viewBox="0 0 58 58"><defs><linearGradient id="cbg02" x1="0" y1="0" x2="1" y2="1"><stop offset="0" stop-color="#dcdcdc"/><stop offset="1" stop-color="#cbcbcb"/></linearGradient></defs><rect width="58" height="58" fill="url(#cbg02)"/><path d="M36.1 29.3L68.7 -3.2L60.2 -11.7L27.7 20.9Z" fill="#3d7fc0"/><path d="M32.3 25.5L64.9 -7.0L60.2 -11.7L27.7 20.9Z" fill="#2a60a0"/><path d="M36.1 29.3L22.0 35.0L27.7 20.9Z" fill="#e6d2a6"/><path d="M27.1 33.0L22.0 35.0L24.0 29.9Z" fill="#222"/></svg>
<svg style="left:60px;top:120px;overflow:hidden" width="60" height="60" viewBox="0 0 60 60"><rect width="60" height="60" fill="#56708c"/><defs><linearGradient id="selg" x1="0" y1="0" x2="0" y2="1"><stop offset="0" stop-color="#94c6e6"/><stop offset="1" stop-color="#79acd2"/></linearGradient></defs><rect x="2" y="2" width="56" height="56" fill="url(#selg)"/><g transform="translate(1 1)"><path d="M13.5 31.5L54.4 2.9L49.9 -3.7L8.9 25.0Z" fill="#a8c8f0"/><path d="M11.4 28.6L52.4 -0.1L49.9 -3.7L8.9 25.0Z" fill="#6a90c8"/><path d="M13.5 31.5L3.0 34.0L8.9 25.0Z" fill="#3a2a40"/><path d="M7.2 33.0L3.0 34.0L5.4 30.4Z" fill="#201828"/></g><path d="M54 6L58 3" stroke="#c8b050" stroke-width="6"/><path d="M6 44Q14 38 18 44Q22 56 40 48Q50 42 58 38" stroke="#3a5480" stroke-width="5" fill="none"/></svg>
<svg style="left:121px;top:121px;overflow:hidden" width="58" height="58" viewBox="0 0 58 58"><defs><linearGradient id="cbg22" x1="0" y1="0" x2="1" y2="1"><stop offset="0" stop-color="#dcdcdc"/><stop offset="1" stop-color="#cbcbcb"/></linearGradient></defs><rect width="58" height="58" fill="url(#cbg22)"/><path d="M58 2L34 22" stroke="#e88420" stroke-width="6"/><path d="M34 22L26 29" stroke="#e8d8f0" stroke-width="4.5"/><path d="M26 29L19 35L24 31Z" stroke="#5a2030" stroke-width="3"/><path d="M14 50Q22 38 26 46Q28 56 40 50Q50 44 58 36" stroke="#3a3a3a" stroke-width="1.6" fill="none"/></svg>
<svg style="left:181px;top:121px;overflow:hidden" width="58" height="58" viewBox="0 0 58 58"><defs><linearGradient id="cbg32" x1="0" y1="0" x2="1" y2="1"><stop offset="0" stop-color="#dcdcdc"/><stop offset="1" stop-color="#cbcbcb"/></linearGradient></defs><rect width="58" height="58" fill="url(#cbg32)"/><path d="M37.7 30.8L71.7 -3.2L63.2 -11.7L29.2 22.3Z" fill="#3a80c8"/><path d="M33.9 26.9L67.9 -7.0L63.2 -11.7L29.2 22.3Z" fill="#2a60a8"/><path d="M37.7 30.8L25.0 35.0L29.2 22.3Z" fill="#d8b888"/><path d="M29.2 33.6L25.0 35.0L26.4 30.8Z" fill="#333"/><path d="M24 56L58 40" stroke="#888" stroke-width="8" stroke-dasharray="1 1.5" opacity="0.7"/><circle cx="17" cy="42" r="3.5" fill="#1a1a1a"/><path d="M14 46L24 52" stroke="#333" stroke-width="3" stroke-dasharray="1 1"/></svg>
<svg style="left:1px;top:181px;overflow:hidden" width="58" height="58" viewBox="0 0 58 58"><defs><linearGradient id="cbg03" x1="0" y1="0" x2="1" y2="1"><stop offset="0" stop-color="#dcdcdc"/><stop offset="1" stop-color="#cbcbcb"/></linearGradient></defs><rect width="58" height="58" fill="url(#cbg03)"/><path d="M35.1 29.3L67.7 -3.2L59.2 -11.7L26.7 20.9Z" fill="#3f7cc0"/><path d="M31.3 25.5L63.9 -7.0L59.2 -11.7L26.7 20.9Z" fill="#2a5ea0"/><path d="M35.1 29.3L21.0 35.0L26.7 20.9Z" fill="#e8d4a8"/><path d="M25.0 33.4L21.0 35.0L22.6 31.0Z" fill="#222"/><path d="M4 48Q14 42 24 48Q34 54 46 46Q52 44 58 48" stroke="#888" stroke-width="1" fill="none"/></svg>
<svg style="left:61px;top:181px;overflow:hidden" width="58" height="58" viewBox="0 0 58 58"><defs><linearGradient id="cbg13" x1="0" y1="0" x2="1" y2="1"><stop offset="0" stop-color="#dcdcdc"/><stop offset="1" stop-color="#cbcbcb"/></linearGradient></defs><rect width="58" height="58" fill="url(#cbg13)"/><path d="M36.1 29.3L68.7 -3.2L60.2 -11.7L27.7 20.9Z" fill="#2e66d8"/><path d="M32.3 25.5L64.9 -7.0L60.2 -11.7L27.7 20.9Z" fill="#1e4ab8"/><path d="M36.1 29.3L22.0 35.0L27.7 20.9Z" fill="#e8d4a8"/><path d="M26.0 33.4L22.0 35.0L23.6 31.0Z" fill="#111"/><circle cx="16" cy="14" r="4.5" fill="none" stroke="#aaa" stroke-width="1"/></svg>
<svg style="left:121px;top:181px;overflow:hidden" width="58" height="58" viewBox="0 0 58 58"><defs><linearGradient id="cbg23" x1="0" y1="0" x2="1" y2="1"><stop offset="0" stop-color="#dcdcdc"/><stop offset="1" stop-color="#cbcbcb"/></linearGradient></defs><rect width="58" height="58" fill="url(#cbg23)"/><path d="M36.1 29.3L68.7 -3.2L60.2 -11.7L27.7 20.9Z" fill="#3a3c40"/><path d="M32.3 25.5L64.9 -7.0L60.2 -11.7L27.7 20.9Z" fill="#222"/><path d="M36.1 29.3L22.0 35.0L27.7 20.9Z" fill="#e8d4a8"/><path d="M26.0 33.4L22.0 35.0L23.6 31.0Z" fill="#111"/><path d="M37 23.5L38 22.5" stroke="#c02020" stroke-width="12"/><path d="M16 46Q14 52 16 58M26 58Q30 50 38 56" stroke="#555" stroke-width="1" fill="none"/></svg>
<svg style="left:181px;top:181px;overflow:hidden" width="58" height="58" viewBox="0 0 58 58"><defs><linearGradient id="cbg33" x1="0" y1="0" x2="1" y2="1"><stop offset="0" stop-color="#dcdcdc"/><stop offset="1" stop-color="#cbcbcb"/></linearGradient></defs><rect width="58" height="58" fill="url(#cbg33)"/><path d="M40.9 29.1L76.1 -0.4L65.8 -12.7L30.6 16.9Z" fill="#b8a08a"/><path d="M36.2 23.6L71.5 -6.0L65.8 -12.7L30.6 16.9Z" fill="#9a8270"/><path d="M40.9 29.1L25.0 32.0L30.6 16.9Z" fill="#f0dcb0"/><path d="M29.5 31.2L25.0 32.0L26.6 27.7Z" fill="#1a1a1a"/><path d="M18 40Q14 48 18 56" stroke="#888" stroke-width="1.2" fill="none"/></svg>
<!--/BRUSHGRID-->
</div>
<div class="a" style="left:1506px;top:577px;width:15px;height:228px;background:#3c3c3c;border-left:1px solid #464646"></div>
<div class="a" style="left:1507px;top:578px;width:13px;height:13px;border:1px solid #565656;background:#3f3f3f"></div>
<div class="a" style="left:1510px;top:582px;border-left:4px solid transparent;border-right:4px solid transparent;border-bottom:4px solid #a0a0a0"></div>
<div class="a" style="left:1507px;top:592px;width:13px;height:26px;border:1px solid #565656;background:#434343"></div>
<div class="a" style="left:1507px;top:792px;width:13px;height:13px;border:1px solid #565656;background:#3f3f3f"></div>
<div class="a" style="left:1510px;top:796px;border-left:4px solid transparent;border-right:4px solid transparent;border-top:4px solid #a0a0a0"></div>
<div class="a" style="left:1261px;top:806px;width:140px;height:22px;background:#3b3b3b;border-radius:3px"></div>
<div class="t" style="left:1265px;top:811px;color:#8a8a8a">Поиск</div>
<div class="chk" style="left:1407px;top:810px"></div><svg style="left:1407px;top:810px" width="14" height="14" viewBox="0 0 14 14"><path d="M3 7.5L6.3 12L10.7 3.5" fill="none" stroke="#bdbdbd" stroke-width="1.9" stroke-linejoin="round" stroke-linecap="round"/></svg>
<div class="t" style="left:1426px;top:810px;font-size:11.5px">Фильтр по метке</div>

<!-- STATUS -->
<div class="a" style="left:1px;top:829px;width:1521px;height:30px;background:#474747"></div>
<div class="a" style="left:8px;top:836px;width:15px;height:15px;border:1px solid #d0d0d0"></div>
<div class="a" style="left:11px;top:839px;width:9px;height:9px;border:1px dotted #d0d0d0;border-radius:50%"></div>
<div class="t" style="left:38px;top:838px">b) Basic-5 Size Opacity</div>
<div class="t" style="left:265px;top:838px">RGB/альфа-канал (8-бит/канал)&nbsp; sRGB-elle-V2-srgbtrc.icc</div>
<div class="a" style="left:884px;top:833px;width:134px;height:23px;border:1px solid #5a5a5a;background:#444"></div>
<div class="t" style="left:888px;top:838px;font-size:11.4px">3 840 <u>x</u> 2 160 (31,9 МиБ)</div>
<div class="a" style="left:1026px;top:833px;width:22px;height:22px;border-radius:50%;background:#333"></div>
<svg style="left:1029px;top:839px" width="16" height="10"><path d="M2 5H14" stroke="#eee" stroke-width="1.2"/><circle cx="2.5" cy="5" r="1.5" fill="#eee"/><path d="M14 2.5V7.5" stroke="#eee" stroke-width="1.2"/></svg>
<div class="t" style="left:1055px;top:838px">0,00°</div>
<div class="t" style="left:1343px;top:838px">33,3%</div>
<div class="a" style="left:1392px;top:843px;width:81px;height:5px;background:#3a3a3a;border-radius:2px"></div>
<div class="a" style="left:1392px;top:843px;width:16px;height:5px;background:#5d84ad;border-radius:2px"></div>
<div class="a" style="left:1406px;top:838px;width:12px;height:13px;background:#4a4a4a;border:1px solid #2e2e2e;border-radius:3px"></div>
<svg style="left:1478px;top:839px" width="17" height="14" viewBox="0 0 17 14" fill="none" stroke="#e0e0e0" stroke-width="1.3"><rect x="0.65" y="0.65" width="15.7" height="9"/><path d="M8.5 10V13M4 13.3H13"/><circle cx="8.5" cy="5" r="0.8" fill="#e0e0e0"/></svg>
<svg style="left:1508px;top:846px" width="12" height="12"><g fill="#777"><rect x="9" y="0" width="2" height="2"/><rect x="6" y="3" width="2" height="2"/><rect x="9" y="3" width="2" height="2"/><rect x="3" y="6" width="2" height="2"/><rect x="6" y="6" width="2" height="2"/><rect x="9" y="6" width="2" height="2"/><rect x="0" y="9" width="2" height="2"/><rect x="3" y="9" width="2" height="2"/><rect x="6" y="9" width="2" height="2"/><rect x="9" y="9" width="2" height="2"/></g></svg>

<!-- DIALOG -->
<div class="a" style="left:176px;top:95px;width:1171px;height:671px;border:1px solid #1a73c9;border-top-color:#3a8ad8;background:#474747;box-shadow:0 2px 7px rgba(0,0,0,0.3)"></div>
<div class="a" style="left:177px;top:96px;width:1169px;height:31px;background:#0078d7"></div><div class="a" style="left:176px;top:94px;width:1171px;height:1px;background:rgba(20,40,70,0.45)"></div>
<div class="kic" style="left:186px;top:103px"></div><svg style="left:185px;top:102px" width="16" height="16" viewBox="0 0 16 16"><path d="M1 1.5L8 8" stroke="#2a2040" stroke-width="2.2" stroke-linecap="round"/><path d="M8 8L11 11" stroke="#111" stroke-width="2.6" stroke-linecap="round"/></svg>
<div class="t" style="left:206px;top:105px;color:#fff">Настройка Krita</div>
<svg style="left:1326px;top:105px" width="11" height="11" viewBox="0 0 11 11"><path d="M0.5 0.5L10.5 10.5M10.5 0.5L0.5 10.5" stroke="#fff" stroke-width="1.2"/></svg>
<!-- list panel -->
<div class="a" style="left:186px;top:136px;width:145px;height:620px;background:#393939;border:1px solid #353535"></div>
<div class="a" style="left:187px;top:136px;width:143px;height:57px;background:#56708d"></div>
<div class="a" style="left:331px;top:136px;width:14px;height:620px;background:#3d3d3d;border-left:1px solid #474747"></div>
<div class="a" style="left:331px;top:136px;width:13px;height:13px;border:1px solid #555;background:#434343"></div>
<div class="a" style="left:334px;top:140px;border-left:4px solid transparent;border-right:4px solid transparent;border-bottom:4px solid #a0a0a0"></div>
<div class="a" style="left:332px;top:151px;width:12px;height:462px;border:1px solid #4e4e4e;background:#404040"></div>
<div class="a" style="left:331px;top:741px;width:13px;height:14px;border:1px solid #555;background:#434343"></div>
<div class="a" style="left:334px;top:746px;border-left:4px solid transparent;border-right:4px solid transparent;border-top:4px solid #a0a0a0"></div>
<div class="a" style="left:187px;top:136px;width:143px;height:619px;overflow:hidden;font-weight:bold;font-size:13px;color:#e4e4e4;text-align:center">
 <svg style="left:57px;top:7px" width="29" height="29" viewBox="0 0 29 29" fill="none" stroke="#e0e0e0" stroke-width="2"><path d="M1.5 14.5L14.5 1.5L27.5 14.5M4.5 12V27H24.5V12"/><path d="M20 4V7.5" stroke-width="3"/><rect x="12" y="17" width="5" height="10" fill="#e0e0e0" stroke="none"/></svg>
 <div class="a" style="left:0;top:39px;width:143px;line-height:15px;transform:scaleX(0.9)">Общие</div>
 <svg style="left:55px;top:69px" width="33" height="18" viewBox="0 0 33 18" fill="none" stroke="#e0e0e0" stroke-width="1.8"><rect x="1" y="1" width="31" height="16"/><path d="M4 5H20M4 9H20M4 13H9M11 13H20M23 5H29M23 9H29M23 13H29" stroke-width="1.6"/><path d="M21.5 4V11" stroke-width="2"/></svg>
 <div class="a" style="left:0;top:96px;width:143px;line-height:15px;transform:scaleX(0.9)">Клавиатурные<br>сокращения</div>
 <svg style="left:57px;top:136px" width="29" height="29" viewBox="0 0 29 29" fill="none" stroke="#e0e0e0" stroke-width="2"><path d="M27.5 6V1.5H1.5V27.5H27.5V20"/><path d="M8 9H16M8 14H16M8 19H16" stroke-width="1.8"/><path d="M18 14H27" stroke-width="1.6"/><path d="M17.5 14L21.5 10.5V17.5Z" fill="#e0e0e0" stroke="none"/></svg>
 <div class="a" style="left:0;top:168px;width:143px;line-height:15px;transform:scaleX(0.9)">Параметры<br>входных данных<br>холста</div>
 <svg style="left:55px;top:223px" width="33" height="28" viewBox="0 0 33 28"><rect x="1.5" y="1.5" width="30" height="19" fill="#6a6a6a" stroke="#e0e0e0" stroke-width="3"/><rect x="14" y="21" width="5" height="4" fill="#e0e0e0"/><rect x="7.5" y="24.5" width="18" height="3" fill="#e0e0e0"/></svg>
 <div class="a" style="left:0;top:254px;width:143px;line-height:15px;transform:scaleX(0.9)">Монитор</div>
 <div class="a" style="left:58px;top:281px;width:27px;height:27px;border-radius:50%;border:2px solid #e0e0e0;background:radial-gradient(circle at 50% 50%,rgba(160,140,150,0.5) 0,rgba(160,140,150,0) 55%),linear-gradient(200deg,#c030c8 0%,#a050b0 30%,#7a8a9a 55%,#30a8a0 85%),radial-gradient(circle at 85% 75%,#c8c040 0,#c8c040 20%,transparent 60%)"></div><div class="a" style="left:60px;top:283px;width:23px;height:23px;border-radius:50%;background:radial-gradient(circle at 80% 70%,rgba(210,200,60,0.85) 0,rgba(210,200,60,0) 50%)"></div>
 <div class="a" style="left:0;top:312px;width:143px;line-height:15px;transform:scaleX(0.9)">Управление цветом</div>
 <svg style="left:58px;top:338px" width="26" height="26" viewBox="0 0 26 26"><g transform="translate(10 16)" fill="#e0e0e0"><circle r="7"/><rect x="-2" y="-10" width="4" height="20"/><rect x="-2" y="-10" width="4" height="20" transform="rotate(45)"/><rect x="-2" y="-10" width="4" height="20" transform="rotate(90)"/><rect x="-2" y="-10" width="4" height="20" transform="rotate(135)"/><circle r="3" fill="#393939"/></g><g transform="translate(21 6)" fill="#e0e0e0"><circle r="3.6"/><rect x="-1" y="-5" width="2" height="10"/><rect x="-1" y="-5" width="2" height="10" transform="rotate(45)"/><rect x="-1" y="-5" width="2" height="10" transform="rotate(90)"/><rect x="-1" y="-5" width="2" height="10" transform="rotate(135)"/><circle r="1.8" fill="#393939"/></g></svg>
 <div class="a" style="left:0;top:369px;width:143px;line-height:15px;transform:scaleX(0.9)">Производительность</div>
 <svg style="left:57px;top:396px" width="29" height="25" viewBox="0 0 29 25" fill="none"><rect x="1.25" y="1.25" width="26.5" height="22.5" stroke="#e0e0e0" stroke-width="2.5"/><path d="M9 17L10 14L18 6L20 8L12 16Z" fill="#e0e0e0"/></svg>
 <div class="a" style="left:0;top:426px;width:143px;line-height:15px;transform:scaleX(0.9)">Настройка планшета</div>
 <svg style="left:57px;top:451px" width="29" height="29" viewBox="0 0 29 29" fill="none"><rect x="1.25" y="1.25" width="26.5" height="26.5" stroke="#e0e0e0" stroke-width="2.5"/><circle cx="9" cy="8.5" r="2.5" fill="#e0e0e0"/><path d="M5 22L11 15L14 18L18 13L24 22Z" fill="#e0e0e0"/></svg>
 <div class="a" style="left:0;top:483px;width:143px;line-height:15px;transform:scaleX(0.9)">Параметры режима<br>холста</div>
 <svg style="left:54px;top:521px" width="34" height="33" viewBox="0 0 34 33"><circle cx="17" cy="16.5" r="16" fill="#d8d8d8"/><g fill="#888"><circle cx="17" cy="4.5" r="2.7"/><circle cx="23" cy="6" r="2.7"/><circle cx="27.5" cy="10.5" r="2.7"/><circle cx="29" cy="16.5" r="2.7"/><circle cx="27.5" cy="22.5" r="2.7"/><circle cx="23" cy="27" r="2.7"/><circle cx="17" cy="28.5" r="2.7"/><circle cx="11" cy="27" r="2.7"/><circle cx="6.5" cy="22.5" r="2.7"/><circle cx="5" cy="16.5" r="2.7"/><circle cx="6.5" cy="10.5" r="2.7"/><circle cx="11" cy="6" r="2.7"/></g><circle cx="17" cy="16.5" r="6" fill="none" stroke="#444" stroke-width="1.6"/><path d="M17 13L20.5 19H13.5Z" fill="#444"/></svg>
 <div class="a" style="left:0;top:555px;width:143px;line-height:15px;transform:scaleX(0.9)">Всплывающая<br>палитра</div>
 <svg style="left:58px;top:595px" width="26" height="26" viewBox="0 0 26 26" fill="#e0e0e0"><circle cx="13" cy="6.5" r="6"/><path d="M1 25Q1 14 13 14Q25 14 25 25Z"/></svg>
</div>
<!-- right page -->
<div class="t" style="left:351px;top:138px;font-size:15.3px;line-height:18px;color:#e0e0e0">Общие</div>
<!-- tab pane -->
<div class="a" style="left:352px;top:188px;width:978px;height:530px;border:1px solid #3d3d3d;border-left-color:#5a5a5a;border-top-color:#555;box-shadow:1px 1px 0 #575757;background:#474747"></div>
<div class="a" style="left:430px;top:165px;width:52px;height:23px;background:#424242;border:1px solid #555;border-bottom:none;border-radius:4px 4px 0 0"></div>
<div class="a" style="left:482px;top:165px;width:100px;height:23px;background:#424242;border:1px solid #555;border-bottom:none;border-radius:4px 4px 0 0"></div>
<div class="a" style="left:583px;top:165px;width:124px;height:23px;background:#424242;border:1px solid #555;border-bottom:none;border-radius:4px 4px 0 0"></div>
<div class="a" style="left:708px;top:165px;width:65px;height:23px;background:#424242;border:1px solid #555;border-bottom:none;border-radius:4px 4px 0 0"></div>
<div class="a" style="left:774px;top:165px;width:61px;height:23px;background:#424242;border:1px solid #555;border-bottom:none;border-radius:4px 4px 0 0"></div>
<div class="a" style="left:836px;top:165px;width:83px;height:23px;background:#424242;border:1px solid #555;border-bottom:none;border-radius:4px 4px 0 0"></div>
<div class="a" style="left:352px;top:162px;width:77px;height:28px;background:#474747;border:1px solid #5a5a5a;border-bottom:none;border-radius:4px 4px 0 0"></div>
<div class="t" style="left:362px;top:170px">Указатель</div>
<div class="t" style="left:441px;top:170px">Окно</div>
<div class="t" style="left:494px;top:170px">Инструменты</div>
<div class="t" style="left:594px;top:170px">Работа с файлами</div>
<div class="t" style="left:719px;top:170px">Вставка</div>
<div class="t" style="left:785px;top:170px">Разное</div>
<div class="t" style="left:847px;top:170px">Источники</div>
<!-- rows -->
<div class="t" style="left:362px;top:204px">Значок указателя кисти:</div>
<div class="combo" style="left:501px;top:199px;width:818px;height:22px"></div>
<div class="t" style="left:506px;top:204px">Без курсора</div>
<div class="ddarr" style="left:1304px;top:208px"></div>
<div class="t" style="left:362px;top:235px">Форма контура кисти:</div>
<div class="combo" style="left:501px;top:228px;width:818px;height:22px"></div>
<div class="t" style="left:506px;top:232px">Контур предварительного просмотра</div>
<div class="ddarr" style="left:1304px;top:237px"></div>
<div class="t" style="left:501px;top:259px">Во время рисования...</div>
<div class="a" style="left:502px;top:276px;width:817px;height:54px;border:1px solid #3d3d3d;box-shadow:1px 1px 0 #525252,inset 1px 1px 0 #525252"></div>
<div class="chk" style="left:513px;top:283px"></div><svg style="left:513px;top:283px" width="14" height="14" viewBox="0 0 14 14"><path d="M3 7.5L6.3 12L10.7 3.5" fill="none" stroke="#bdbdbd" stroke-width="1.9" stroke-linejoin="round" stroke-linecap="round"/></svg>
<div class="t" style="left:532px;top:284px">Показывать контур</div>
<div class="chk" style="left:513px;top:307px"></div><svg style="left:513px;top:307px" width="14" height="14" viewBox="0 0 14 14"><path d="M3 7.5L6.3 12L10.7 3.5" fill="none" stroke="#bdbdbd" stroke-width="1.9" stroke-linejoin="round" stroke-linecap="round"/></svg>
<div class="t" style="left:532px;top:308px">Использовать эффективный размер контура</div>
<div class="t" style="left:362px;top:342px">Цвет контура кисти:</div>
<div class="a" style="left:502px;top:337px;width:46px;height:22px;background:#363636;border:1px solid #2c2c2c;border-radius:3px;box-shadow:0 0 0 1px #4e4e4e"></div>
<div class="a" style="left:506px;top:341px;width:38px;height:14px;background:#78fa78"></div>
<div class="chk nochk" style="left:363px;top:367px;width:14px;height:14px"></div>
<style>.nochk::after{display:none}</style>
<div class="t" style="left:381px;top:368px">Отдельные параметры для ластика</div>
<!-- eraser group (disabled) -->
<div class="a" style="left:363px;top:386px;width:956px;height:130px;border:1px solid #3d3d3d;box-shadow:1px 1px 0 #525252,inset 1px 1px 0 #525252"></div>
<div class="t" style="left:374px;top:401px;color:#8a8a8a">Значок указателя ластика:</div>
<div class="combo" style="left:525px;top:397px;width:783px;height:22px;background:#454545;border-color:#3a3a3a;box-shadow:none"></div>
<div class="t" style="left:530px;top:401px;color:#8a8a8a">Ластик</div>
<div class="ddarr" style="left:1292px;top:406px;border-top-color:#6a6a6a"></div>
<div class="t" style="left:374px;top:431px;color:#8a8a8a">Форма контура ластика:</div>
<div class="combo" style="left:525px;top:426px;width:783px;height:22px;background:#454545;border-color:#3a3a3a;box-shadow:none"></div>
<div class="t" style="left:530px;top:430px;color:#8a8a8a">Контур предварительного просмотра</div>
<div class="ddarr" style="left:1292px;top:435px;border-top-color:#6a6a6a"></div>
<div class="t" style="left:525px;top:456px;color:#8a8a8a">Во время рисования ластиком...</div>
<div class="a" style="left:525px;top:474px;width:783px;height:2px;border-top:1px solid #3e3e3e;border-bottom:1px solid #4f4f4f"></div>
<div class="t" style="left:374px;top:487px;color:#8a8a8a">Цвет контура ластика:</div>
<div class="a" style="left:525px;top:484px;width:47px;height:22px;background:#3a3a3a;border:1px solid #2e2e2e;border-radius:3px;box-shadow:0 0 0 1px #4a4a4a"></div>
<div class="a" style="left:529px;top:488px;width:39px;height:14px;background:#2e2e2e"></div>
<!-- color sampler -->
<div class="t" style="left:362px;top:529px">Color Sampler Shape:</div>
<div class="combo" style="left:501px;top:524px;width:818px;height:23px"></div>
<div class="t" style="left:506px;top:529px">Circle</div>
<div class="ddarr" style="left:1304px;top:534px"></div>
<div class="a" style="left:363px;top:553px;width:956px;height:151px;border:1px solid #3d3d3d;box-shadow:1px 1px 0 #525252,inset 1px 1px 0 #525252"></div>
<div class="a" style="left:392px;top:563px;width:898px;height:20px;background:#393939;border-radius:4px"></div>
<div class="a" style="left:750px;top:565px;width:24px;height:17px;background:linear-gradient(#47bb78 0,#47bb78 50%,#4aa27a 50%);border-left:2px solid #9a9a9a;border-right:2px solid #9a9a9a"></div>
<div class="a" style="left:909px;top:565px;width:24px;height:17px;background:linear-gradient(#47bb78 0,#47bb78 50%,#4aa27a 50%);border-left:2px solid #9a9a9a;border-right:2px solid #9a9a9a"></div>
<svg style="left:832px;top:564px" width="18" height="18"><path d="M9 1V17M1 9H17" stroke="#6e6e6e" stroke-width="1.4"/></svg>
<div class="t" style="left:372px;top:594px">Диаметр:</div>
<div class="a" style="left:433px;top:590px;width:862px;height:20px;background:#3a3a3a"></div>
<div class="a" style="left:433px;top:590px;width:387px;height:20px;background:#56728f"></div>
<div class="t" style="left:855px;top:594px;color:#e8e8e8">180</div>
<div class="a" style="left:1295px;top:590px;width:14px;height:20px;background:#3e3e3e;border:1px solid #555;border-radius:0 3px 3px 0"></div>
<div class="a" style="left:1298px;top:593px;border-left:4px solid transparent;border-right:4px solid transparent;border-bottom:4px solid #8a8a8a"></div>
<div class="a" style="left:1298px;top:602px;border-left:4px solid transparent;border-right:4px solid transparent;border-top:4px solid #8a8a8a"></div>
<div class="t" style="left:372px;top:623px">Толщина:</div>
<div class="a" style="left:433px;top:619px;width:862px;height:20px;background:#3a3a3a"></div>
<div class="a" style="left:433px;top:619px;width:194px;height:20px;background:#56728f"></div>
<div class="t" style="left:851px;top:623px;color:#e8e8e8">12 %</div>
<div class="a" style="left:1295px;top:619px;width:14px;height:20px;background:#3e3e3e;border:1px solid #555;border-radius:0 3px 3px 0"></div>
<div class="a" style="left:1298px;top:622px;border-left:4px solid transparent;border-right:4px solid transparent;border-bottom:4px solid #8a8a8a"></div>
<div class="a" style="left:1298px;top:631px;border-left:4px solid transparent;border-right:4px solid transparent;border-top:4px solid #8a8a8a"></div>
<div class="chk" style="left:432px;top:651px;width:13px;height:13px"></div><svg style="left:432px;top:651px" width="14" height="14" viewBox="0 0 14 14"><path d="M3 7.5L6.3 12L10.7 3.5" fill="none" stroke="#bdbdbd" stroke-width="1.9" stroke-linejoin="round" stroke-linecap="round"/></svg>
<div class="t" style="left:451px;top:651px"><u>E</u>nable Outline</div>
<div class="chk" style="left:432px;top:678px;width:13px;height:13px"></div><svg style="left:432px;top:678px" width="14" height="14" viewBox="0 0 14 14"><path d="M3 7.5L6.3 12L10.7 3.5" fill="none" stroke="#bdbdbd" stroke-width="1.9" stroke-linejoin="round" stroke-linecap="round"/></svg>
<div class="t" style="left:451px;top:678px">Extra <u>C</u>omparison Space</div>
<!-- buttons -->
<div class="a" style="left:352px;top:728px;width:91px;height:22px;background:linear-gradient(#4c4c4c,#454545);border:1px solid #323232;border-radius:4px;box-shadow:inset 0 0 0 1px #5a5a5a"></div>
<div class="t" style="left:356px;top:732px">По умолчанию</div>
<div class="a" style="left:1166px;top:728px;width:79px;height:22px;background:linear-gradient(#4c4c4c,#454545);border:1px solid #323232;border-radius:4px;box-shadow:inset 0 0 0 1px #5a5a5a"></div>
<div class="t" style="left:1197px;top:732px"><u>O</u>K</div>
<div class="a" style="left:1252px;top:728px;width:78px;height:22px;background:linear-gradient(#4c4c4c,#454545);border:1px solid #323232;border-radius:4px;box-shadow:inset 0 0 0 1px #5a5a5a"></div>
<div class="t" style="left:1270px;top:732px">О<u>т</u>мена</div>
</body></html>
